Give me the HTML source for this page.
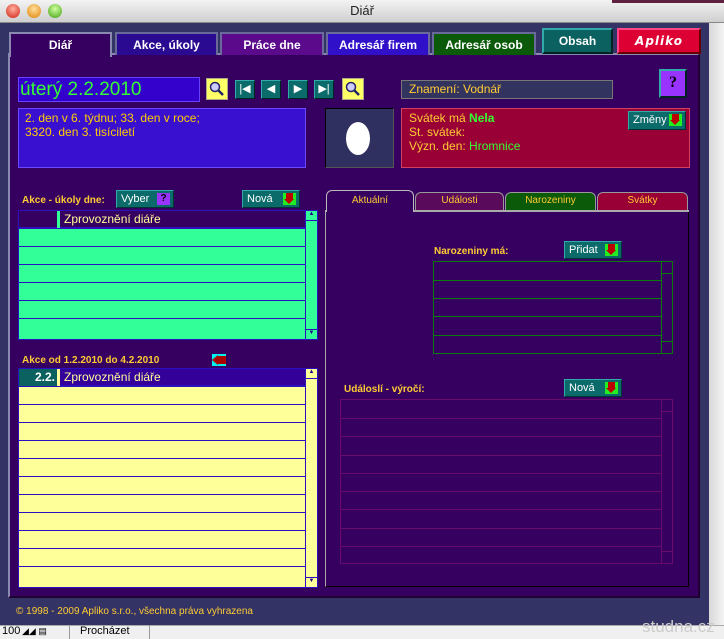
<!DOCTYPE html>
<html><head><meta charset="utf-8"><style>
*{margin:0;padding:0;box-sizing:border-box}
body{width:724px;height:639px;overflow:hidden;background:#ececec;font-family:"Liberation Sans",sans-serif;position:relative}
.a{position:absolute}
.y{color:#ffcc33;font-weight:bold;font-size:10px}
.tab{position:absolute;top:32px;height:23px;color:#fff;font-weight:bold;font-size:12px;text-align:center;line-height:23px;border:2px solid #6a6a9a;border-bottom:none}
.btn{position:absolute;background:#0b6b6b;border:1px solid #3aa;border-right-color:#033;border-bottom-color:#033;color:#fff;font-size:11px;line-height:17px;padding-left:4px}
.arr{position:absolute;right:3px;top:2px;width:13px;height:12px;background:#22ee22}
.arr:after{content:"";position:absolute;left:3px;top:0;width:7px;height:6px;background:#b00}
.arr:before{content:"";position:absolute;left:1px;top:6px;border-left:5.5px solid transparent;border-right:5.5px solid transparent;border-top:5px solid #b00}
.nb{position:absolute;top:80px;width:20px;height:19px;background:#0b6b6b;border:1px solid #3aa;border-right-color:#022;border-bottom-color:#022;color:#fff;font-size:11px;text-align:center;line-height:17px}
.mg{position:absolute;top:78px;width:22px;height:22px;background:#ffff66;border:1px solid #aa8;}
.row{position:absolute;left:0;right:12px;height:18px;border-bottom:1px solid #2a10c0}
</style></head><body>
<div class="a" style="left:0;top:0;width:724px;height:23px;background:linear-gradient(#f3f3f3,#cfcfcf);border-bottom:1px solid #888"></div>
<div class="a" style="left:6px;top:4px;width:14px;height:14px;border-radius:50%;background:radial-gradient(circle at 50% 35%,#ffb0a0,#d02010)"></div>
<div class="a" style="left:27px;top:4px;width:14px;height:14px;border-radius:50%;background:radial-gradient(circle at 50% 35%,#ffe0a0,#e08000)"></div>
<div class="a" style="left:48px;top:4px;width:14px;height:14px;border-radius:50%;background:radial-gradient(circle at 50% 35%,#d0ffa0,#40a010)"></div>
<div class="a" style="left:0;top:3px;width:724px;text-align:center;font-size:13px;color:#222">Diář</div>
<div class="a" style="left:612px;top:0;width:112px;height:3px;background:#602040"></div>
<div class="a" style="left:0;top:23px;width:709px;height:602px;background:#333366"></div>
<div class="a" style="left:709px;top:23px;width:15px;height:602px;background:linear-gradient(90deg,#d8d8d8,#f4f4f4)"></div>
<div class="a" style="left:8px;top:53px;width:692px;height:545px;background:#360060;border-left:2px solid #8a8ab0;border-top:2px solid #8a8ab0;border-right:2px solid #200030;border-bottom:2px solid #200030"></div>
<div class="tab" style="left:9px;width:103px;height:25px;background:#360060;border-color:#8a8ab0">Diář</div>
<div class="tab" style="left:115px;width:103px;background:#2a0a90">Akce, úkoly</div>
<div class="tab" style="left:220px;width:104px;background:#5a0a8a">Práce dne</div>
<div class="tab" style="left:326px;width:104px;background:#3010c8">Adresář firem</div>
<div class="tab" style="left:432px;width:104px;background:#0a5a0a">Adresář osob</div>
<div class="tab" style="left:542px;top:28px;width:71px;height:26px;background:#0b6060;border:2px solid #3aa;border-bottom-color:#022;border-right-color:#022">Obsah</div>
<div class="tab" style="left:617px;top:28px;width:84px;height:26px;background:#dd0033;border:2px solid #f48;border-bottom-color:#600;border-right-color:#600;font-style:italic;font-family:'DejaVu Sans',sans-serif;letter-spacing:1px">Apliko</div>
<div class="a" style="left:18px;top:77px;width:182px;height:25px;background:#3300cc;border:1px solid #6644ff;color:#33ff33;font-size:19px;line-height:23px;padding-left:1px">úterý 2.2.2010</div>
<div class="mg" style="left:206px"><svg width="20" height="20"><circle cx="8" cy="8" r="4.5" fill="#ccf" stroke="#226" stroke-width="1.5"/><path d="M11 11l5 5" stroke="#226" stroke-width="2.5"/></svg></div>
<div class="nb" style="left:235px">|◀</div>
<div class="nb" style="left:261px">◀</div>
<div class="nb" style="left:288px">▶</div>
<div class="nb" style="left:314px">▶|</div>
<div class="mg" style="left:342px"><svg width="20" height="20"><circle cx="8" cy="8" r="4.5" fill="#ccf" stroke="#226" stroke-width="1.5"/><path d="M11 11l5 5" stroke="#226" stroke-width="2.5"/></svg></div>
<div class="a" style="left:401px;top:80px;width:212px;height:19px;background:#33335f;border:1px solid #777;color:#ffcc33;font-size:12px;line-height:17px;padding-left:7px">Znamení: Vodnář</div>
<div class="a" style="left:659px;top:69px;width:28px;height:29px;background:#9933ff;border:2px solid #3aa;border-right-color:#022;border-bottom-color:#022;color:#000;font-size:16px;font-weight:bold;text-align:center;line-height:24px;font-family:'Liberation Serif',serif">?</div>
<div class="a" style="left:18px;top:108px;width:288px;height:60px;background:#3a10d0;border:1px solid #6a4aff;color:#ffcc00;font-size:12px;line-height:14px;padding:2px 6px">2. den v 6. týdnu; 33. den v roce;<br>3320. den 3. tisíciletí</div>
<div class="a" style="left:325px;top:108px;width:69px;height:60px;background:#303060;border:1px solid #000;border-right-color:#555;border-bottom-color:#555"><div class="a" style="left:20px;top:13px;width:24px;height:33px;border-radius:50%;background:#fff"></div></div>
<div class="a" style="left:401px;top:108px;width:289px;height:60px;background:#990036;border:1px solid #d04060;color:#ffcc33;font-size:12px;line-height:14px;padding:2px 7px">Svátek má <b style="color:#33ff33">Nela</b><br>St. svátek:<br>Význ. den: <b style="color:#33ff33;font-weight:normal">Hromnice</b></div>
<div class="btn" style="left:628px;top:111px;width:58px;height:19px">Změny<span class="arr"></span></div>
<div class="a y" style="left:22px;top:195px">Akce - úkoly dne:</div>
<div class="btn" style="left:116px;top:190px;width:58px;height:18px">Vyber<span class="a" style="right:3px;top:2px;width:13px;height:12px;background:#9933ff;color:#000;font-weight:bold;font-size:10px;line-height:12px;text-align:center">?</span></div>
<div class="btn" style="left:242px;top:190px;width:58px;height:18px">Nová<span class="arr"></span></div>
<div class="a" style="left:18px;top:210px;width:300px;height:130px;background:#33ff99;border:1px solid #2a10c0">
 <div class="a" style="left:0;top:0;width:287px;height:18px;background:#360060;border-bottom:2px solid #2a10c0"><div class="a" style="left:38px;top:0;width:3px;height:17px;background:#33ff99"></div><div class="a" style="left:45px;top:1px;color:#ffff99;font-size:12px">Zprovoznění diáře</div></div>
 <div class="row" style="top:18px"></div><div class="row" style="top:36px"></div><div class="row" style="top:54px"></div><div class="row" style="top:72px"></div><div class="row" style="top:90px"></div>
 <div class="a" style="right:0;top:0;width:12px;height:128px;border-left:1px solid #2a10c0"><div style="height:10px;border-bottom:1px solid #2a10c0;font-size:6px;text-align:center;color:#208">▲</div><div style="position:absolute;bottom:0;width:11px;height:10px;border-top:1px solid #2a10c0;font-size:6px;text-align:center;color:#208">▼</div></div>
</div>
<div class="a y" style="left:22px;top:355px">Akce od 1.2.2010 do 4.2.2010</div>
<div class="a" style="left:212px;top:354px;width:14px;height:12px;background:#00eeee"><div class="a" style="left:0;top:1px;border-right:6px solid #a00;border-top:5px solid transparent;border-bottom:5px solid transparent"></div><div class="a" style="left:6px;top:2px;width:8px;height:8px;background:#a00"></div></div>
<div class="a" style="left:18px;top:368px;width:300px;height:220px;background:#ffff99;border:1px solid #2a10c0">
 <div class="a" style="left:0;top:0;width:287px;height:18px;background:#330099;border-bottom:2px solid #2a10c0"><div class="a" style="left:0;top:0;width:38px;height:17px;background:#0b6060;color:#fff;font-size:12px;font-weight:bold;text-align:right;padding-right:2px;line-height:17px">2.2.</div><div class="a" style="left:38px;top:0;width:3px;height:17px;background:#ffff99"></div><div class="a" style="left:45px;top:1px;color:#ffff99;font-size:12px">Zprovoznění diáře</div></div>
 <div class="row" style="top:18px"></div><div class="row" style="top:36px"></div><div class="row" style="top:54px"></div><div class="row" style="top:72px"></div><div class="row" style="top:90px"></div><div class="row" style="top:108px"></div><div class="row" style="top:126px"></div><div class="row" style="top:144px"></div><div class="row" style="top:162px"></div><div class="row" style="top:180px"></div>
 <div class="a" style="right:0;top:0;width:12px;height:218px;border-left:1px solid #2a10c0"><div style="height:10px;border-bottom:1px solid #2a10c0;font-size:6px;text-align:center;color:#208">▲</div><div style="position:absolute;bottom:0;width:11px;height:10px;border-top:1px solid #2a10c0;font-size:6px;text-align:center;color:#208">▼</div></div>
</div>
<div class="a" style="left:325px;top:210px;width:364px;height:377px;border:1px solid #000;border-left-color:#aaa;border-top:none"></div>
<div class="a" style="left:414px;top:210px;width:275px;height:2px;background:#aaa"></div>
<div class="a" style="left:326px;top:190px;width:88px;height:22px;background:#360060;border:1px solid #bbb;border-bottom:none;border-radius:6px 6px 0 0;color:#ffcc33;font-size:10px;text-align:center;line-height:20px">Aktuální</div>
<div class="a" style="left:415px;top:192px;width:89px;height:18px;background:#5a0a5a;border:1px solid #999;border-bottom:none;border-radius:6px 6px 0 0;color:#ffcc33;font-size:10px;text-align:center;line-height:16px">Události</div>
<div class="a" style="left:505px;top:192px;width:91px;height:18px;background:#0a5a0a;border:1px solid #999;border-bottom:none;border-radius:6px 6px 0 0;color:#ffcc33;font-size:10px;text-align:center;line-height:16px">Narozeniny</div>
<div class="a" style="left:597px;top:192px;width:91px;height:18px;background:#990036;border:1px solid #999;border-bottom:none;border-radius:6px 6px 0 0;color:#ffcc33;font-size:10px;text-align:center;line-height:16px">Svátky</div>
<div class="a y" style="left:434px;top:246px">Narozeniny má:</div>
<div class="btn" style="left:564px;top:241px;width:58px;height:18px">Přidat<span class="arr"></span></div>
<div class="a" style="left:433px;top:261px;width:240px;height:93px;border:1px solid #0a7a0a">
 <div class="a" style="left:0;top:18px;width:227px;border-top:1px solid #0a7a0a"></div><div class="a" style="left:0;top:36px;width:227px;border-top:1px solid #0a7a0a"></div><div class="a" style="left:0;top:54px;width:227px;border-top:1px solid #0a7a0a"></div><div class="a" style="left:0;top:73px;width:227px;border-top:1px solid #0a7a0a"></div>
 <div class="a" style="left:227px;top:0;width:12px;height:91px;border-left:1px solid #0a7a0a"><div class="a" style="top:11px;width:11px;border-top:1px solid #0a7a0a"></div><div class="a" style="top:79px;width:11px;border-top:1px solid #0a7a0a"></div></div>
</div>
<div class="a y" style="left:344px;top:384px">Událoslí - výročí:</div>
<div class="btn" style="left:564px;top:379px;width:58px;height:18px">Nová<span class="arr"></span></div>
<div class="a" style="left:340px;top:399px;width:333px;height:165px;border:1px solid #6a0a6a">
 <div class="a" style="left:0;top:18px;width:320px;border-top:1px solid #6a0a6a"></div><div class="a" style="left:0;top:36px;width:320px;border-top:1px solid #6a0a6a"></div><div class="a" style="left:0;top:55px;width:320px;border-top:1px solid #6a0a6a"></div><div class="a" style="left:0;top:73px;width:320px;border-top:1px solid #6a0a6a"></div><div class="a" style="left:0;top:91px;width:320px;border-top:1px solid #6a0a6a"></div><div class="a" style="left:0;top:109px;width:320px;border-top:1px solid #6a0a6a"></div><div class="a" style="left:0;top:128px;width:320px;border-top:1px solid #6a0a6a"></div><div class="a" style="left:0;top:146px;width:320px;border-top:1px solid #6a0a6a"></div>
 <div class="a" style="left:320px;top:0;width:12px;height:163px;border-left:1px solid #6a0a6a"><div class="a" style="top:11px;width:11px;border-top:1px solid #6a0a6a"></div><div class="a" style="top:151px;width:11px;border-top:1px solid #6a0a6a"></div></div>
</div>
<div class="a" style="left:16px;top:606px;color:#ffcc33;font-size:10px">© 1998 - 2009 Apliko s.r.o., všechna práva vyhrazena</div>
<div class="a" style="left:0;top:625px;width:724px;height:14px;background:#f0f0f0;border-top:1px solid #aaa"></div>
<div class="a" style="left:2px;top:625px;font-size:11px;color:#000">100</div>
<div class="a" style="left:22px;top:626px;width:48px;height:13px;border-right:1px solid #999;font-size:9px;color:#000">◢◢ ▤</div>
<div class="a" style="left:70px;top:625px;width:80px;height:14px;border-right:1px solid #999;font-size:11px;padding-left:10px;color:#000">Procházet</div>
<div class="a" style="left:642px;top:617px;font-size:17px;color:#ccc">studna.cz</div>
</body></html>
